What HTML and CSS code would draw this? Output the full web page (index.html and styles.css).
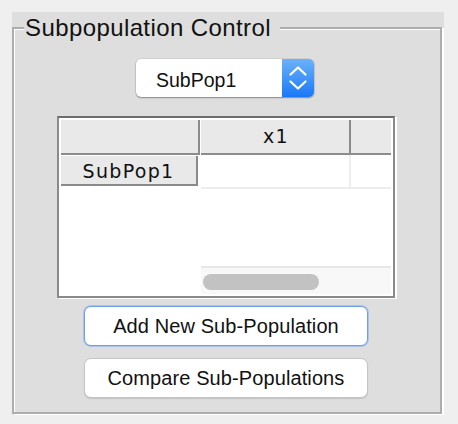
FILE: index.html
```html
<!doctype html>
<html>
 <head>
  <meta charset="UTF-8">
  <title>Subpopulation Control</title>
  <link rel="stylesheet" href="styles.css">
 </head>
 <body>
  <div class="panel">
   <fieldset class="group">
    <legend class="group-title">Subpopulation Control</legend>
    <div class="group-body">
     <!-- popup menu -->
     <div class="popup">
      <span class="popup-label">SubPop1</span>
      <span class="popup-arrows">
       <svg width="32" height="38" viewBox="0 0 32 38">
        <polyline points="8.5,15.5 16,8.5 23.5,15.5" fill="none" stroke="#fff" stroke-width="2.2" stroke-linecap="round" stroke-linejoin="round"/>
        <polyline points="8.5,22.5 16,29.5 23.5,22.5" fill="none" stroke="#fff" stroke-width="2.2" stroke-linecap="round" stroke-linejoin="round"/>
       </svg>
      </span>
     </div>
     <!-- table -->
     <div class="table">
      <div class="th corner"></div>
      <div class="th col">x1</div>
      <div class="th fill"></div>
      <div class="row-head">SubPop1</div>
      <div class="td"></div>
      <div class="td last"></div>
      <div class="hscroll"><div class="thumb"></div></div>
     </div>
     <button class="btn btn-focus">Add New Sub-Population</button>
     <button class="btn btn-second">Compare Sub-Populations</button>
    </div>
   </fieldset>
  </div>
 </body>
</html>
```
FILE: styles.css
```css
*{
	margin:0;
	padding:0;
	box-sizing:border-box;
}
body{
	background:#efefef;
	font-family:"Liberation Sans", Arial, sans-serif;
	color:#111;
}
.panel{
	margin:12px 0 0 12px;
	width:432px;
	height:403px;
	background:#dedede;
	padding-top:2px;
}
.group{
	width:430px;
	height:400px;
	border:2px solid #adadad;
	box-shadow:inset 1px 1px 0 #fff, 2px 1px 0 #fff;
	padding:0 2px 0 0;
}
.group-title{
	margin-left:10px;
	padding:0 9px 0 1px;
	font-size:24px;
	line-height:28px;
	letter-spacing:0.4px;
	background:#dedede;
	color:#111;
}
.group-body{
	display:flex;
	flex-direction:column;
	align-items:center;
}

/* popup menu */
.popup{
	display:flex;
	width:178px;
	height:38px;
	margin-top:17px;
	margin-right:2px;
	background:#fff;
	border-radius:5px;
	box-shadow:0 0 0 0.5px rgba(0,0,0,0.12), 0 1px 1.5px rgba(0,0,0,0.35);
}
.popup-label{
	flex:1;
	padding:4px 0 0 20px;
	font-size:19.5px;
	line-height:34px;
}
.popup-arrows{
	width:32px;
	height:38px;
	border-radius:0 5px 5px 0;
	background:linear-gradient(#6cb2fb, #1a78f6);
}
.popup-arrows svg{
	display:block;
}

/* table */
.table{
	display:grid;
	grid-template-columns:140px 150px 40px;
	grid-template-rows:35px 34px 1fr 28px;
	width:338px;
	height:182px;
	margin-top:19px;
	padding:2px;
	background:#fff;
	border:2px solid #8a8a8a;
	border-top-color:#6d6d6d;
	box-shadow:2px 1px 0 #fff;
	font-family:"DejaVu Sans", sans-serif;
	font-size:19px;
	letter-spacing:1.3px;
}
.th{
	background:#e9e9e9;
	border-bottom:2px solid #8c8c8c;
	text-align:center;
	line-height:33px;
}
.corner{
	margin-right:1px;
	border-right:2px solid #8c8c8c;
}
.col{
	border-right:2px solid #8c8c8c;
	padding-left:2px;
}
.row-head{
	margin:1px 3px 3px 0;
	background:#e9e9e9;
	border-right:2px solid #8a8a8a;
	border-bottom:2px solid #8a8a8a;
	text-align:center;
	line-height:31px;
}
.td{
	border-right:2px solid #ededed;
	border-bottom:2px solid #ededed;
}
.td.last{
	border-right:0;
}
.hscroll{
	grid-row:4;
	grid-column:2 / 4;
	background:#f8f8f8;
	border-top:2px solid #e7e7e7;
	padding:6px 0 0 2px;
}
.thumb{
	width:116px;
	height:16px;
	border-radius:8px;
	background:#c2c2c2;
}

/* buttons */
.btn{
	width:284px;
	height:40px;
	background:#fff;
	border-radius:7px;
	font-family:"Liberation Sans", Arial, sans-serif;
	font-size:20px;
	color:#111;
	letter-spacing:0.1px;
}
.btn-focus{
	margin-top:8px;
	border:1px solid #6f9fe9;
	box-shadow:0 0 0 1px rgba(120,168,238,0.5);
}
.btn-second{
	margin-top:12px;
	border:1px solid #c4c4c4;
	box-shadow:0 1px 1px rgba(0,0,0,0.12);
}
```
